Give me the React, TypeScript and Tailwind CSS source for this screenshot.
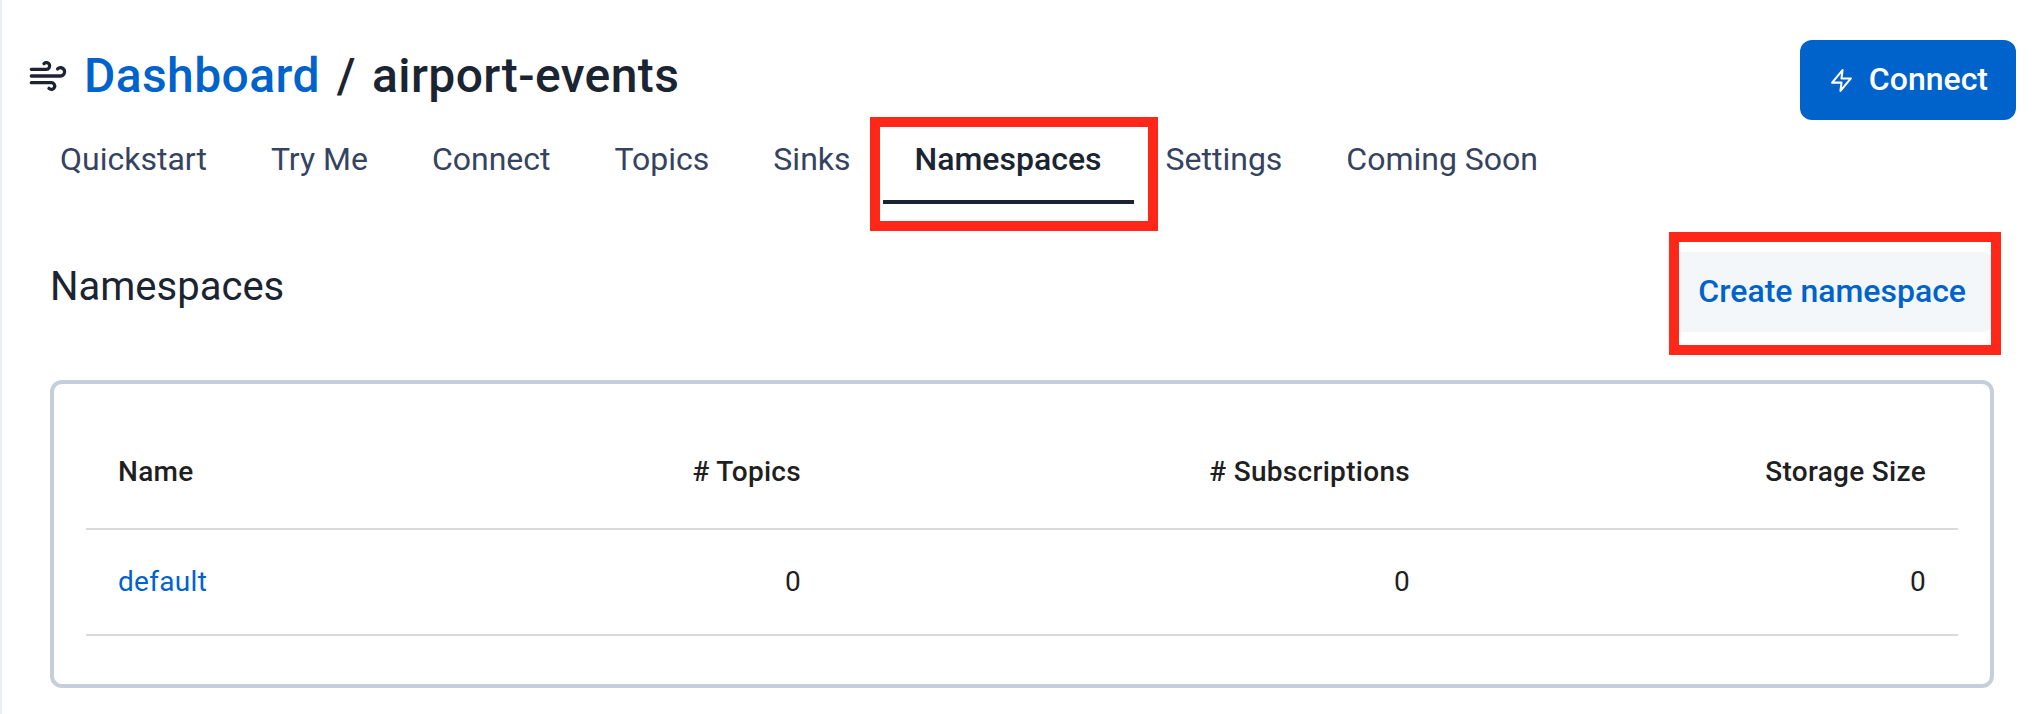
import React from "react";

const tabs = ["Quickstart", "Try Me", "Connect", "Topics", "Sinks", "Namespaces", "Settings", "Coming Soon"];
const activeTab = "Namespaces";

const namespaces = [{ name: "default", topics: 0, subscriptions: 0, storage: 0 }];

function WindIcon({ className }: { className?: string }) {
  return (
    <svg className={className} viewBox="0 0 24 24" fill="none" stroke="currentColor" strokeWidth="2" strokeLinecap="round" strokeLinejoin="round">
      <path d="M9.59 4.59A2 2 0 1 1 11 8H2m10.59 11.41A2 2 0 1 0 14 16H2m15.73-8.27A2.5 2.5 0 1 1 19.5 12H2" />
    </svg>
  );
}

function BoltIcon({ className }: { className?: string }) {
  return (
    <svg className={className} viewBox="0 0 24 24" fill="none" stroke="currentColor" strokeWidth="2" strokeLinecap="round" strokeLinejoin="round">
      <polygon points="13 2 3 14 12 14 11 22 21 10 12 10 13 2" />
    </svg>
  );
}

const rowGrid = "grid grid-cols-[373px_374px_609px_516px] border-b-2 border-[#dadada] text-[28px] tracking-[0.3px]";

export default function App() {
  return (
    <div className="relative h-[714px] w-full overflow-hidden border-l-2 border-[#e8edf2] bg-white font-['Roboto',sans-serif] text-[#1b2431]">
      <header className="flex h-[120px] items-start justify-between pl-[26px] pr-[18px] pt-10">
        <h1 className="flex items-center text-[48px] font-medium leading-[72px] tracking-[0.4px]">
          <WindIcon className="mr-4 h-10 w-10" />
          <a className="text-[#0063cc]">Dashboard</a>
          <span className="mx-[17px]">/</span>
          <span className="-ml-px">airport-events</span>
        </h1>
        <button className="flex h-20 w-[216px] items-center justify-end rounded-xl bg-[#0063cc] pr-7 text-[32px] font-medium leading-[48px] text-white">
          <BoltIcon className="mr-[15px] h-[25px] w-[25px]" />
          <span className="-mt-0.5">Connect</span>
        </button>
      </header>

      <nav className="flex h-[84px] pl-[26px]">
        {tabs.map((label) => (
          <a
            key={label}
            className={
              label === activeTab
                ? "border-b-4 border-[#1b2233] px-8 pt-[15px] text-[32px] font-medium leading-[48px]"
                : "px-8 pt-[15px] text-[32px] leading-[48px] text-[#36435f]"
            }
          >
            {label}
          </a>
        ))}
      </nav>

      <main className="pl-12 pr-10 pt-12">
        <div className="flex h-32 items-start justify-between">
          <h2 className="pt-[9px] text-[40px] leading-[52px]">Namespaces</h2>
          <button className="flex h-20 items-center rounded-xl bg-[#f3f7fa] px-7 text-[32px] font-medium leading-[48px] text-[#0063cc]">
            <span className="-mt-0.5">Create namespace</span>
          </button>
        </div>

        <section className="h-[308px] rounded-xl border-4 border-[#c5cedb] p-8 text-[#1f1f1f]">
          <div className={`${rowGrid} h-[114px] font-medium leading-[48px]`}>
            <div className="p-8">Name</div>
            <div className="p-8 text-right"># Topics</div>
            <div className="p-8 text-right"># Subscriptions</div>
            <div className="p-8 text-right">Storage Size</div>
          </div>
          {namespaces.map((n) => (
            <div key={n.name} className={`${rowGrid} h-[106px] leading-[40px]`}>
              <a className="p-8 text-[#0063cc]">{n.name}</a>
              <div className="p-8 text-right">{n.topics}</div>
              <div className="p-8 text-right">{n.subscriptions}</div>
              <div className="p-8 text-right">{n.storage}</div>
            </div>
          ))}
        </section>
      </main>

      <div className="absolute left-[868px] top-[117px] h-[114px] w-[288px] border-[10px] border-[#ff2717]" />
      <div className="absolute left-[1667px] top-[232px] h-[123px] w-[332px] border-[10px] border-[#ff2717]" />
    </div>
  );
}
